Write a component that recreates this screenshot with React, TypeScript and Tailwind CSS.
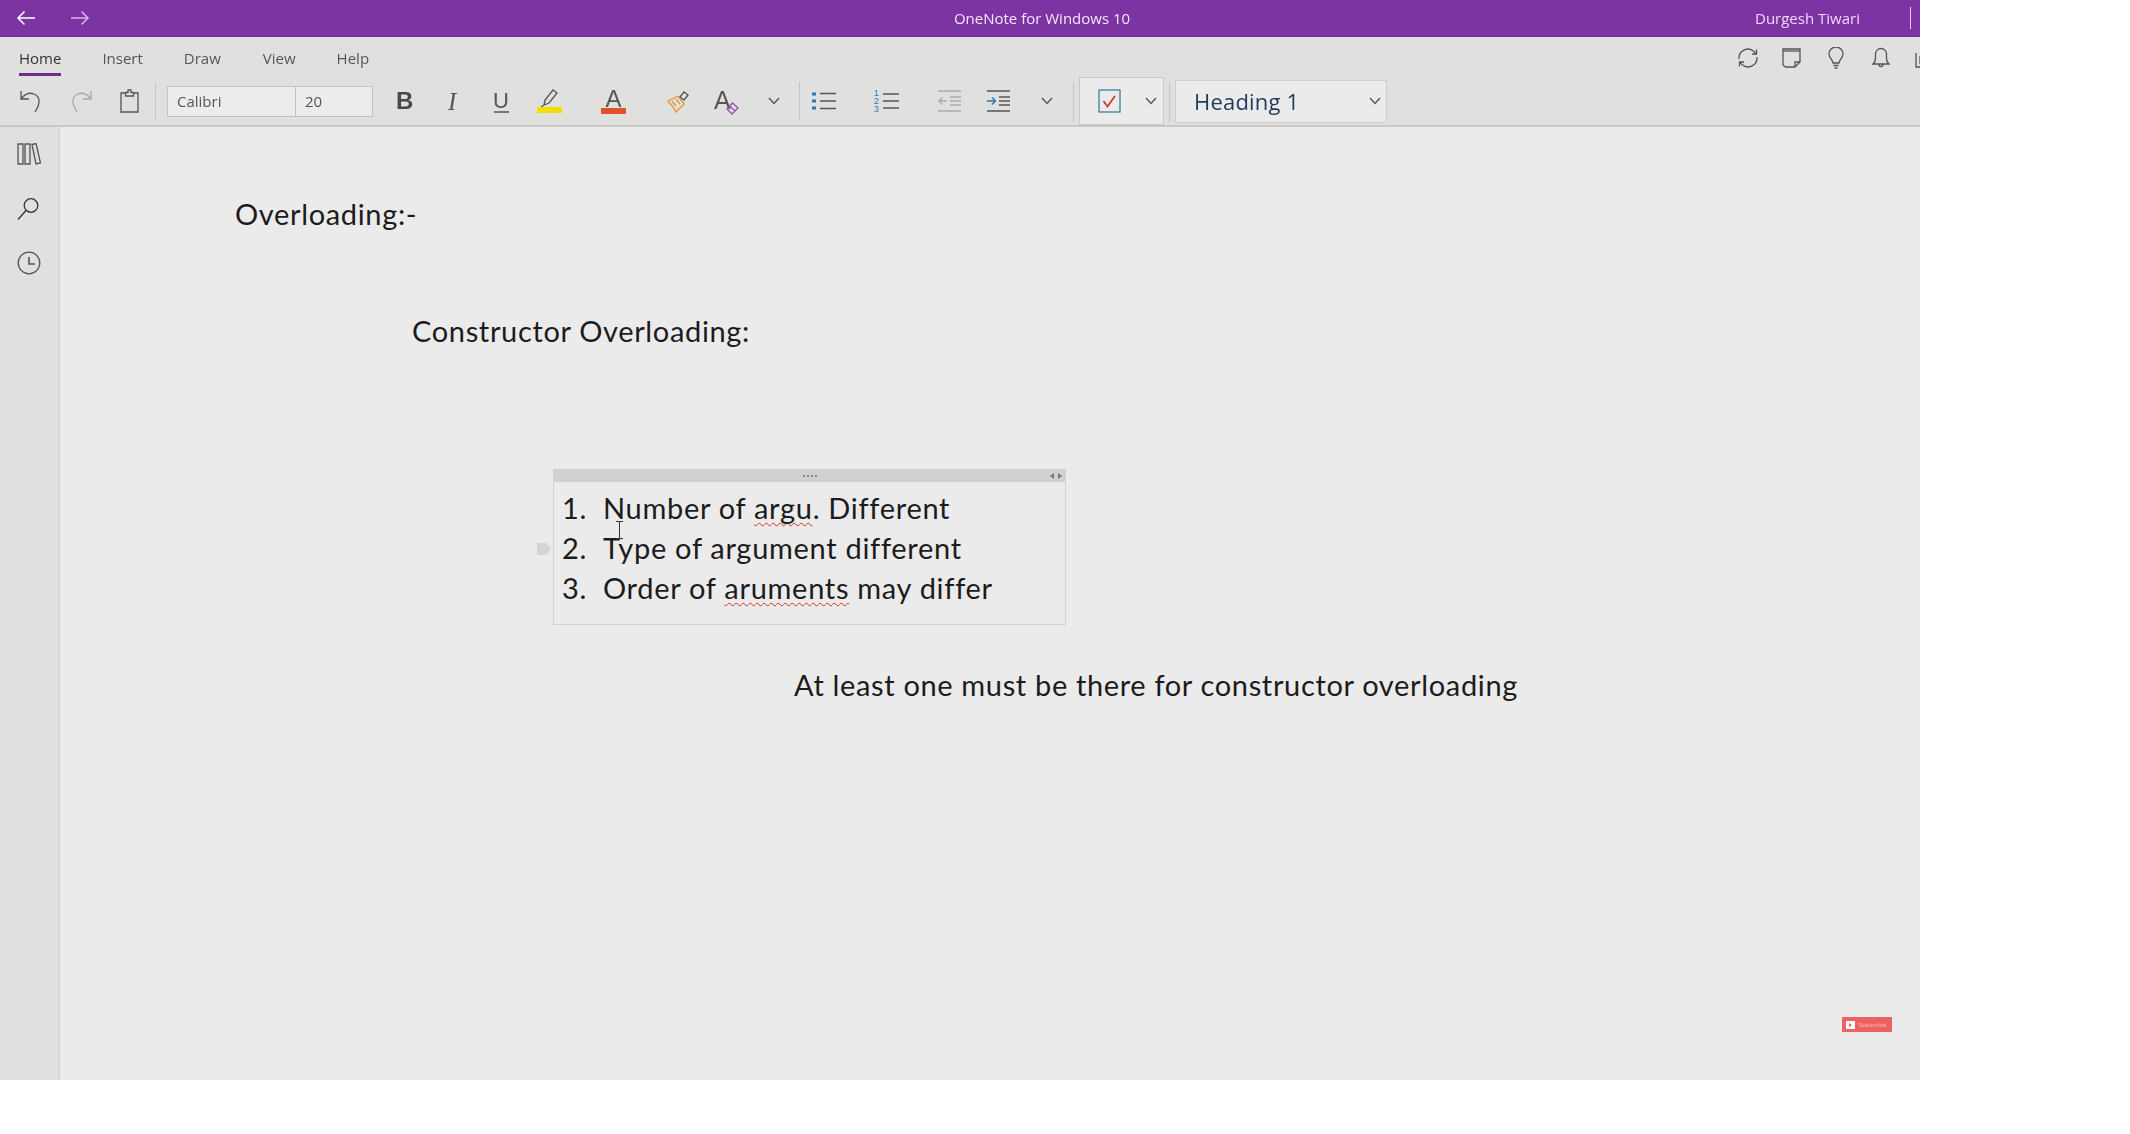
import type { ReactNode } from "react"

const ui = "font-['Open_Sans',sans-serif]"
const note = "font-['Lato',sans-serif]"

function Icon({ w, h, view, className, children }: { w: number; h: number; view?: string; className?: string; children: ReactNode }) {
  return (
    <svg
      width={w}
      height={h}
      viewBox={view ?? `0 0 ${w} ${h}`}
      fill="none"
      stroke="currentColor"
      strokeWidth={1.3}
      className={`shrink-0 ${className ?? ""}`}
    >
      {children}
    </svg>
  )
}

function Chevron({ className }: { className?: string }) {
  return (
    <Icon w={12} h={8} className={className}>
      <path d="M1 1l5 5.5L11 1" strokeWidth={1.4} />
    </Icon>
  )
}

function Divider({ className }: { className: string }) {
  return <div className={`w-px h-[39px] bg-[#c4c4c2] shrink-0 ${className}`} />
}

function TitleBar() {
  return (
    <div className={`${ui} h-[37px] shrink-0 bg-[#7c34a3] border-b border-[#6a2a8f] flex items-center text-[#f3e6f8]`}>
      <div className="w-[952px] flex items-center shrink-0">
        <Icon w={20} h={16} className="ml-[16px] text-white">
          <path d="M19 8H2M8.5 1.5L2 8l6.5 6.5" strokeWidth={1.5} />
        </Icon>
        <Icon w={20} h={16} className="ml-[34px] text-[#d9b5ea]">
          <path d="M1 8h17M11.5 1.5L18 8l-6.5 6.5" strokeWidth={1.5} />
        </Icon>
      </div>
      <span className="w-[180px] text-[15px] whitespace-nowrap text-center">OneNote for Windows 10</span>
      <span className="ml-[623px] w-[105px] text-[15px] whitespace-nowrap text-[#f0d9f7]">Durgesh Tiwari</span>
      <div className="ml-[50px] w-px h-[22px] bg-[#e6d2ef]" />
    </div>
  )
}

function TabRow() {
  return (
    <div className={`${ui} h-[40px] flex items-start text-[15px] text-[#555]`}>
      <div className="ml-[19px] w-[44px] h-[39px] border-b-[3px] border-[#6b2c91] text-[#333] pt-[11px] leading-[20px]">Home</div>
      <div className="ml-[41px] pt-[11px] leading-[20px]">Insert</div>
      <div className="ml-[41px] pt-[11px] leading-[20px]">Draw</div>
      <div className="ml-[42px] pt-[11px] leading-[20px]">View</div>
      <div className="ml-[41px] pt-[11px] leading-[20px]">Help</div>
      <div className="ml-[1367px] flex items-center pt-[10px] text-[#555]">
        <Icon w={24} h={22} view="0 0 24 22">
          <path d="M3 12a9 9 0 0 1 15-7.5L20 6.5M21 10a9 9 0 0 1-15 7.5L4 15.5" />
          <path d="M20.5 2.5v4.5h-4.5M3.5 19.5V15h4.5" />
        </Icon>
        <Icon w={19} h={20} className="ml-[22px]">
          <path d="M1 1h17v13l-5 5H3.5L1 17zM13 19v-5h5" />
          <path d="M1 3h17" />
        </Icon>
        <Icon w={16} h={22} className="ml-[27px]">
          <path d="M5 16c0-3-4-5-4-9a7 7 0 0 1 14 0c0 4-4 6-4 9zM5.5 18.5h5M6.5 21h3" />
        </Icon>
        <Icon w={18} h={22} className="ml-[28px]">
          <path d="M1 17c2-1.500 2.500-3 2.500-6V7a5.500 5.500 0 0 1 11 0v4c0 3 .5 4.500 2.500 6zM7 17.500a2 2 0 0 0 4 0" />
        </Icon>
        <Icon w={12} h={20} className="ml-[25px]">
          <path d="M1 5v14h11M5 16V9l5-6" />
        </Icon>
      </div>
    </div>
  )
}

function ToolRow() {
  return (
    <div className="h-[48px] flex items-center text-[#555]">
      <Icon w={22} h={24} className="ml-[20px]">
        <path d="M1 2v8h8M1.500 9.500C5 5 9 3 14 5c6 2.500 7 9 1 18" />
      </Icon>
      <Icon w={22} h={24} className="ml-[28px] text-[#a9a9a9]">
        <path d="M21 2v8h-8M20.500 9.500C17 5 13 3 8 5 2 7.500 1 14 7 23" />
      </Icon>
      <Icon w={19} h={24} className="ml-[28px]">
        <path d="M5 4H1v19h17V4h-4M5.500 7h8V3.500h-2.500V1H8v2.500H5.500z" />
      </Icon>
      <Divider className="ml-[16px]" />
      <div className={`${ui} ml-[11px] flex h-[31px] w-[206px] border border-[#c2c2c0] bg-[#ececec] text-[15px] text-[#555] leading-[29px]`}>
        <span className="w-[128px] pl-[9px] border-r border-[#c2c2c0]">Calibri</span>
        <span className="pl-[9px]">20</span>
      </div>
      <span className="ml-[23px] w-[18px] font-['Liberation_Sans',sans-serif] font-bold text-[24px] leading-none text-[#4a4a4a]">B</span>
      <span className="ml-[34px] w-[12px] font-['Liberation_Serif',serif] italic text-[25px] leading-none text-[#555]">I</span>
      <div className="ml-[33px] w-[16px] flex flex-col items-center">
        <span className="font-['Liberation_Sans',sans-serif] text-[22px] leading-[21px] text-[#555]">U</span>
        <div className="w-[15px] h-[2px] bg-[#777]" />
      </div>
      <div className="ml-[28px] w-[25px] flex flex-col items-center">
        <Icon w={20} h={18}>
          <path d="M4 16l1-5 8-10 4 3-8 10zM1 18l3-2" />
        </Icon>
        <div className="w-[25px] h-[6px] bg-[#f0e000]" />
      </div>
      <div className="ml-[39px] w-[25px] flex flex-col items-center">
        <span className="font-['Liberation_Sans',sans-serif] text-[24px] leading-[20px] text-[#555]">A</span>
        <div className="w-[25px] h-[6px] mt-[-1px] bg-[#e0522a]" />
      </div>
      <Icon w={23} h={23} className="ml-[40px]">
        <path d="M2 11l10-5 6 8-8 8C8 18 5 14 2 11z" stroke="#e8923a" />
        <path d="M6 11l4 5M10 9l4 5" stroke="#e8923a" />
        <path d="M14 7l4-5 4 3-4 5z" />
      </Icon>
      <div className="ml-[25px] w-[25px] h-[27px] relative">
        <span className="font-['Liberation_Sans',sans-serif] text-[25px] leading-[25px] text-[#555]">A</span>
        <Icon w={13} h={13} className="absolute right-0 bottom-0 text-[#9b4fa8]">
          <path d="M1 7l5.500-6L12 6l-6 6zM4 4l5 5" />
        </Icon>
      </div>
      <Chevron className="ml-[29px]" />
      <Divider className="ml-[19px]" />
      <Icon w={24} h={20} className="ml-[12px]">
        <path d="M0 3h4M0 10h4M0 17h4" stroke="#2f75b5" strokeWidth={3} />
        <path d="M8 2.500h16M8 10h16M8 17.500h16" strokeWidth={1.7} />
      </Icon>
      <div className="ml-[38px] flex items-center">
        <div className="flex flex-col text-[9px] leading-[8px] text-[#2f75b5] font-['Liberation_Sans',sans-serif]">
          <span>1</span>
          <span>2</span>
          <span>3</span>
        </div>
        <Icon w={18} h={20} className="ml-[2px]">
          <path d="M2 3h16M2 10h16M2 17h16" strokeWidth={1.7} />
        </Icon>
      </div>
      <Icon w={23} h={24} className="ml-[39px] text-[#aaa]">
        <path d="M0 2h23M12 8h11M12 12h11M12 16h11M0 22h23" strokeWidth={1.5} />
        <path d="M9 12H1M4.500 8.500L1 12l3.500 3.500" strokeWidth={1.3} />
      </Icon>
      <Icon w={23} h={24} className="ml-[26px]">
        <path d="M0 2h23M12 8h11M12 12h11M12 16h11M0 22h23" strokeWidth={1.7} />
        <path d="M0 12h8M5 8.500L8.500 12 5 15.500" stroke="#2f75b5" strokeWidth={1.4} />
      </Icon>
      <Chevron className="ml-[31px]" />
      <Divider className="ml-[20px]" />
      <div className="ml-[5px] h-[48px] w-[85px] bg-[#ebebeb] border border-[#c8c8c6] flex items-center shrink-0">
        <Icon w={23} h={24} className="ml-[18px] text-[#3f7f98]">
          <rect x="1" y="1" width="21" height="22" />
          <path d="M5.500 12l4 5.500L17 7" stroke="#d0342a" strokeWidth={1.7} />
        </Icon>
        <Chevron className="ml-[24px]" />
      </div>
      <Divider className="ml-[5px]" />
      <div className={`${ui} ml-[5px] h-[43px] w-[212px] bg-[#ebebeb] border border-[#cfcfcd] flex items-center shrink-0`}>
        <span className="ml-[18px] text-[22px] tracking-[0.2px] text-[#1f3a5f]">Heading 1</span>
        <Chevron className="ml-auto mr-[5px]" />
      </div>
    </div>
  )
}

function Sidebar() {
  return (
    <div className="w-[60px] shrink-0 bg-[#e0e0de] border-r-2 border-[#d6d6d4] flex flex-col items-start pl-[17px] pt-[16px] text-[#555]">
      <Icon w={24} h={22}>
        <path d="M1 1h5v20H1zM8 1h5v20H8zM15 1.500l4-1 4.500 19.500-4.500 1z" />
      </Icon>
      <Icon w={22} h={24} className="mt-[32px] text-[#333]">
        <circle cx="14" cy="8.500" r="6.800" />
        <path d="M9 13.500L1 22.500" />
      </Icon>
      <Icon w={24} h={24} className="mt-[30px]">
        <circle cx="12" cy="12" r="10.800" />
        <path d="M12 6v7h6" strokeWidth={1.6} />
      </Icon>
    </div>
  )
}

function Heading({ className, children }: { className: string; children: ReactNode }) {
  return <div className={`${note} absolute text-[#1c1c1c] text-[29px] leading-[40px] tracking-[0.65px] whitespace-nowrap ${className}`}>{children}</div>
}

function Misspelt({ children }: { children: ReactNode }) {
  return <span className="underline decoration-wavy decoration-[#d8322a] decoration-1 underline-offset-[3px] [text-decoration-skip-ink:none]">{children}</span>
}

function NoteBox() {
  const rows: [string, ReactNode][] = [
    ["1.", <>Number of <Misspelt>argu</Misspelt>. Different</>],
    ["2.", <>Type of argument different</>],
    ["3.", <>Order of <Misspelt>aruments</Misspelt> may differ</>],
  ]
  return (
    <div className="absolute left-[553px] top-[469px] w-[513px] h-[156px] border border-[#d2d2d2]">
      <div className="h-[12px] bg-[#d0d0d0] flex items-center relative">
        <div className="mx-auto flex gap-[2px]">
          <div className="w-[2px] h-[2px] bg-[#888]" />
          <div className="w-[2px] h-[2px] bg-[#888]" />
          <div className="w-[2px] h-[2px] bg-[#888]" />
          <div className="w-[2px] h-[2px] bg-[#888]" />
        </div>
        <div className="absolute right-[3px] top-[3px] flex gap-[4px]">
          <div className="border-y-[3px] border-r-[4px] border-y-transparent border-r-[#777]" />
          <div className="border-y-[3px] border-l-[4px] border-y-transparent border-l-[#777]" />
        </div>
      </div>
      <div className={`${note} pt-[6px] pl-[8px] text-[29px] leading-[40px] tracking-[0.7px] text-[#1c1c1c]`}>
        {rows.map(([n, text]) => (
          <div key={n} className="flex whitespace-nowrap">
            <span className="w-[41px]">{n}</span>
            <span>{text}</span>
          </div>
        ))}
      </div>
    </div>
  )
}

export default function App() {
  return (
    <div className="w-[2130px] h-[1134px] bg-white overflow-hidden">
      <div className="w-[1920px] h-[1080px] flex flex-col overflow-hidden bg-[#ebebeb] blur-[0.4px]">
        <TitleBar />
        <div className="h-[90px] shrink-0 bg-[#e0e0de] border-b-2 border-[#c9c9c7]">
          <TabRow />
          <ToolRow />
        </div>
        <div className="flex-1 flex">
          <Sidebar />
          <div className="flex-1" />
        </div>
      </div>
      {/* note containers sit on the free page canvas */}
      <Heading className="left-[235px] top-[194px]">Overloading:-</Heading>
      <Heading className="left-[412px] top-[311px]">Constructor Overloading:</Heading>
      <NoteBox />
      <div className="absolute left-[537px] top-[543px] w-[14px] h-[12px] bg-[#d4d4d4] [clip-path:polygon(0_0,65%_0,100%_50%,65%_100%,0_100%)]" />
      <svg width="9" height="18" viewBox="0 0 9 18" className="absolute left-[615px] top-[521px]" fill="none" stroke="#333" strokeWidth="1">
        <path d="M1 .5h7M4.500 .5v17M1 17.500h7" />
      </svg>
      <Heading className="left-[794px] top-[665px]">At least one must be there for constructor overloading</Heading>
      <div className="absolute left-[1842px] top-[1017px] w-[50px] h-[15px] bg-[#ec6260] flex items-center pl-[4px] gap-[4px] blur-[0.3px]">
        <div className="w-[9px] h-[8px] bg-white flex items-center justify-center">
          <div className="border-y-[2px] border-l-[3px] border-y-transparent border-l-[#ec6260]" />
        </div>
        <span className={`${ui} text-[6px] leading-none text-[#f8c6c4]`}>Subscribe</span>
      </div>
    </div>
  )
}
